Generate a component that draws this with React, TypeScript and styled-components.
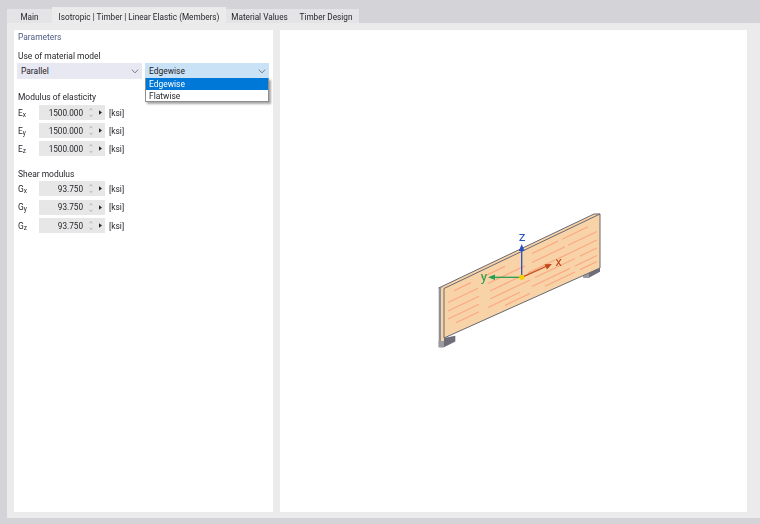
import styled, { createGlobalStyle } from "styled-components";

const GlobalStyle = createGlobalStyle`
  html, body {
    margin: 0;
    padding: 0;
    background: #d3d3d8;
    font-family: Roboto, "Liberation Sans", sans-serif;
    font-size: 8.45px;
    color: #1f2126;
  }
`;

// the reference is a slightly rescaled capture, so everything is a little soft
const Screen = styled.div`
  width: 760px;
  height: 524px;
  overflow: hidden;
  padding: 7px 0 0 7px;
  box-sizing: border-box;
  filter: blur(0.3px);
`;

const TabStrip = styled.div`
  display: flex;
  align-items: flex-end;
  height: 16px;
  font-size: 8.2px;
`;

const Tab = styled.div<{ $active?: boolean; $width: number }>`
  width: ${(p) => p.$width}px;
  height: ${(p) => (p.$active ? 16 : 14)}px;
  line-height: ${(p) => (p.$active ? 20 : 16)}px;
  text-align: center;
  white-space: nowrap;
  background: ${(p) => (p.$active ? "#ebebeb" : "#e4e4e6")};
  color: #24262c;
`;

const Page = styled.div`
  display: grid;
  grid-template-columns: 259px 467px;
  gap: 7px;
  width: 753px;
  height: 495px;
  box-sizing: border-box;
  padding: 7px 13px 6px 7px;
  background: #ebebeb;
`;

const ParamPanel = styled.div`
  background: #fff;
  padding: 1px 4px 0 3px;
  display: flex;
  flex-direction: column;
`;

const PanelTitle = styled.div`
  height: 12px;
  line-height: 12px;
  margin: 0 0 7px 1px;
  color: #4e5a80;
`;

const GroupLabel = styled.div<{ $after: number }>`
  height: 12px;
  line-height: 12px;
  margin: 0 0 ${(p) => p.$after}px 1px;
`;

const ComboRow = styled.div`
  position: relative;
  display: grid;
  grid-template-columns: 125px 124px;
  gap: 3px;
  margin-bottom: 12px;
`;

const Combo = styled.div<{ $open?: boolean }>`
  height: 16px;
  line-height: 16px;
  padding: 0 3px 0 4px;
  display: flex;
  justify-content: space-between;
  align-items: center;
  background: ${(p) => (p.$open ? "#c9e2f6" : "#e8e8f2")};
`;

const DropList = styled.div`
  position: absolute;
  top: 15px;
  left: 128px;
  width: 124px;
  height: 24px;
  box-sizing: border-box;
  background: #fff;
  border: 1px solid #8f8f8f;
  border-top: none;
  box-shadow: 2px 2px 2px rgba(0, 0, 0, 0.35);
`;

const DropItem = styled.div<{ $selected?: boolean }>`
  height: 12px;
  line-height: 12px;
  padding: 0 3px;
  background: ${(p) => (p.$selected ? "#0078d7" : "transparent")};
  color: ${(p) => (p.$selected ? "#fff" : "#1f2126")};
`;

const FieldGroup = styled.div<{ $gap: number }>`
  display: flex;
  flex-direction: column;
  gap: ${(p) => p.$gap}px;
  margin-bottom: 12px;
`;

const FieldRow = styled.div`
  display: flex;
  align-items: center;
  height: 15px;
`;

const Symbol = styled.div`
  width: 21px;
  padding-left: 1px;
  sub {
    font-size: 6.5px;
    vertical-align: baseline;
    position: relative;
    top: 1px;
  }
`;

const NumberBox = styled.div`
  width: 66px;
  height: 15px;
  background: #e7e7e7;
  display: flex;
  align-items: center;
  justify-content: flex-end;
`;

const NumberValue = styled.span`
  margin-right: 5px;
  font-size: 8.2px;
`;

const Unit = styled.div`
  margin-left: 4px;
`;

const ViewPanel = styled.div`
  background: #fff;
`;

const Drawing = styled.svg`
  display: block;
`;

const Chevron = () => (
  <svg width="8" height="5" viewBox="0 0 8 5">
    <path d="M0.7 0.6 4 3.8 7.3 0.6" fill="none" stroke="#7a7d85" strokeWidth="1" />
  </svg>
);

const Spinner = () => (
  <svg width="17" height="15" viewBox="0 0 17 15">
    <path d="M1.5 5 3 3.6 4.5 5M1.5 10 3 11.4 4.5 10" fill="none" stroke="#9a9a9f" strokeWidth="0.8" />
    <path d="M11 5.2 14 7.5 11 9.8Z" fill="#25262b" />
  </svg>
);

const fields = {
  elasticity: [
    { axis: "x", value: "1500.000" },
    { axis: "y", value: "1500.000" },
    { axis: "z", value: "1500.000" },
  ],
  shear: [
    { axis: "x", value: "93.750" },
    { axis: "y", value: "93.750" },
    { axis: "z", value: "93.750" },
  ],
};

// grain streaks on the wall face: y of the row at x=445, then x ranges of its dashes
const grainRows: [number, [number, number][]][] = [
  [295, [[454, 471], [481, 505], [532, 558], [562, 588]]],
  [304, [[448, 478], [488, 525], [532, 565], [568, 597]]],
  [312.5, [[448, 479], [490, 520], [528, 555], [558, 597]]],
  [320.5, [[448, 479], [490, 530], [535, 575], [580, 597]]],
  [328, [[456, 479], [488, 520], [532, 570], [575, 597]]],
  [334, [[505, 530], [545, 575], [580, 597]]],
];

const WallDrawing = () => {
  const slope = -0.477;
  return (
    <Drawing width="467" height="482" viewBox="280 30 467 482">
      {/* feet */}
      <path d="M438.7 341V347.3H444L455.3 341.5V335.7L444 338Z" fill="#6e6e7a" />
      <path d="M438.7 341V347.3H444V341Z" fill="#9a9aa2" />
      <path d="M583.3 273.3V277.7H589L600 271.7V266.7Z" fill="#6e6e7a" />
      <path d="M583.3 273.3V277.7H589V273.3Z" fill="#9a9aa2" />
      {/* wall */}
      <path d="M444 288.5 600 214V268L444 338Z" fill="#f9d3a8" />
      {grainRows.map(([y, dashes]) =>
        dashes.map(([x1, x2]) => (
          <line
            key={`${y}-${x1}`}
            x1={x1}
            y1={y + slope * (x1 - 445)}
            x2={x2}
            y2={y + slope * (x2 - 445)}
            stroke="#fba983"
            strokeWidth="1.2"
          />
        ))
      )}
      <path d="M438.7 288 594 214H600L444 288.5Z" fill="#f9d3a8" stroke="#666770" strokeWidth="1" />
      <path d="M438.7 288H441V341H438.7Z" fill="#8f8f9a" />
      <path d="M441 288H444V341H441Z" fill="#f9d3a8" />
      <path d="M444 288.5V338L600 268V214" fill="none" stroke="#666770" strokeWidth="1" />
      {/* axes */}
      <path d="M521.7 277.3V249" stroke="#2a4fc0" strokeWidth="1.3" />
      <path d="M521.7 244 518.8 251H524.6Z" fill="#2a4fc0" />
      <path d="M521.7 277.3H493" stroke="#22a050" strokeWidth="1.3" />
      <path d="M488 277.3 495 274.6V280Z" fill="#22a050" />
      <path d="M521.7 277.3 547 266" stroke="#c04a1a" strokeWidth="1.3" />
      <path d="M552 264 544.6 264.2 547 269.4Z" fill="#c04a1a" />
      <circle cx="521.7" cy="277.3" r="2.6" fill="#f5d000" />
      <text x="522" y="240.5" textAnchor="middle" fontSize="13.5" fill="#2a4fc0">z</text>
      <text x="484" y="280.5" textAnchor="middle" fontSize="13.5" fill="#22a050">y</text>
      <text x="558.5" y="266" textAnchor="middle" fontSize="13.5" fill="#c04a1a">x</text>
    </Drawing>
  );
};

export default function App() {
  return (
    <Screen>
      <GlobalStyle />
      <TabStrip>
        <Tab $width={45}>Main</Tab>
        <Tab $width={174} $active>Isotropic | Timber | Linear Elastic (Members)</Tab>
        <Tab $width={67}>Material Values</Tab>
        <Tab $width={66}>Timber Design</Tab>
      </TabStrip>
      <Page>
        <ParamPanel>
          <PanelTitle>Parameters</PanelTitle>
          <GroupLabel $after={1}>Use of material model</GroupLabel>
          <ComboRow>
            <Combo>Parallel<Chevron /></Combo>
            <Combo $open>Edgewise<Chevron /></Combo>
            <DropList>
              <DropItem $selected>Edgewise</DropItem>
              <DropItem>Flatwise</DropItem>
            </DropList>
          </ComboRow>
          <GroupLabel $after={2}>Modulus of elasticity</GroupLabel>
          <FieldGroup $gap={3}>
            {fields.elasticity.map((f) => (
              <FieldRow key={f.axis}>
                <Symbol>E<sub>{f.axis}</sub></Symbol>
                <NumberBox><NumberValue>{f.value}</NumberValue><Spinner /></NumberBox>
                <Unit>[ksi]</Unit>
              </FieldRow>
            ))}
          </FieldGroup>
          <GroupLabel $after={1}>Shear modulus</GroupLabel>
          <FieldGroup $gap={3.5}>
            {fields.shear.map((f) => (
              <FieldRow key={f.axis}>
                <Symbol>G<sub>{f.axis}</sub></Symbol>
                <NumberBox><NumberValue>{f.value}</NumberValue><Spinner /></NumberBox>
                <Unit>[ksi]</Unit>
              </FieldRow>
            ))}
          </FieldGroup>
        </ParamPanel>
        <ViewPanel>
          <WallDrawing />
        </ViewPanel>
      </Page>
    </Screen>
  );
}
